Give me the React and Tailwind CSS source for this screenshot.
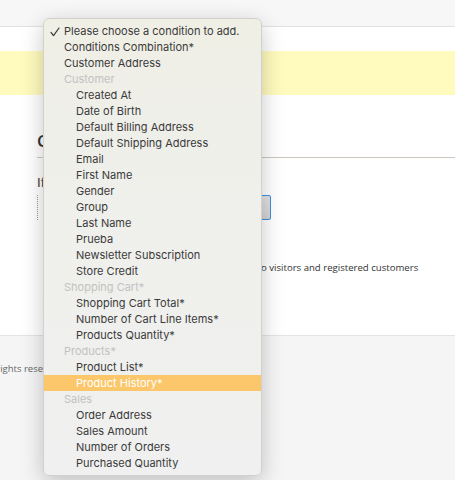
import React from "react";

const ITEMS = [
  { label: "Please choose a condition to add.", kind: "top", checked: true },
  { label: "Conditions Combination*", kind: "top" },
  { label: "Customer Address", kind: "top" },
  { label: "Customer", kind: "group" },
  { label: "Created At", kind: "sub" },
  { label: "Date of Birth", kind: "sub" },
  { label: "Default Billing Address", kind: "sub" },
  { label: "Default Shipping Address", kind: "sub" },
  { label: "Email", kind: "sub" },
  { label: "First Name", kind: "sub" },
  { label: "Gender", kind: "sub" },
  { label: "Group", kind: "sub" },
  { label: "Last Name", kind: "sub" },
  { label: "Prueba", kind: "sub" },
  { label: "Newsletter Subscription", kind: "sub" },
  { label: "Store Credit", kind: "sub" },
  { label: "Shopping Cart*", kind: "group" },
  { label: "Shopping Cart Total*", kind: "sub" },
  { label: "Number of Cart Line Items*", kind: "sub" },
  { label: "Products Quantity*", kind: "sub" },
  { label: "Products*", kind: "group" },
  { label: "Product List*", kind: "sub" },
  { label: "Product History*", kind: "sub", active: true },
  { label: "Sales", kind: "group" },
  { label: "Order Address", kind: "sub" },
  { label: "Sales Amount", kind: "sub" },
  { label: "Number of Orders", kind: "sub" },
  { label: "Purchased Quantity", kind: "sub" },
];

function Check() {
  return (
    <svg width="10" height="10" viewBox="0 0 10 10" className="absolute left-[6px] top-[4px]">
      <path d="M1 5.4 L3.5 8.6 L9 1" fill="none" stroke="#3a3a3a" strokeWidth="1.2" strokeLinecap="round" strokeLinejoin="round" />
    </svg>
  );
}

function Menu() {
  return (
    <div
      className="absolute left-[43px] top-[18px] w-[219px] rounded-[6px] border border-[#d0d0cc] pt-[4px] pb-[4px] shadow-[0_6px_22px_rgba(0,0,0,0.22)] bg-[linear-gradient(180deg,#f0efe5_0%,#efefea_25%,#f0f0f0_100%)]"
      style={{ fontFamily: "Inter, 'Noto Sans', sans-serif" }}
    >
      {ITEMS.map((it) => (
        <div
          key={it.label}
          className={
            "relative h-[16px] leading-[16px] text-[11px] whitespace-nowrap " +
            (it.active ? "bg-[#fcc76a] text-white " : "") +
            (it.kind === "sub" ? "pl-[32px] " : "pl-[20px] ") +
            (it.kind === "group" ? "text-[#c2c2c2]" : it.active ? "" : "text-[#3a3a3a]")
          }
        >
          {it.checked && <Check />}
          {it.label}
        </div>
      ))}
    </div>
  );
}

export default function App() {
  return (
    <div className="relative w-[455px] h-[480px] overflow-hidden bg-white" style={{ fontFamily: "'Open Sans', sans-serif" }}>
      <div className="h-[27px] bg-[#f7f7f7] border-b border-[#e2e2e2]" />
      <div className="h-[24px]" />
      <div className="h-[44px] bg-[#fffbbe]" />
      <div className="h-[240px] pl-[37px]">
        <div className="pt-[35px] text-[17px] font-semibold text-[#333] leading-[22px] whitespace-nowrap">Conditions</div>
        <div className="mt-[5px] h-px bg-[#cdc6bd]" />
        <div className="mt-[17px] text-[12px] font-semibold text-[#555] leading-[16px] whitespace-nowrap">If ALL of these conditions are TRUE:</div>
        <div className="flex mt-[4px] h-[25px]">
          <div className="w-px border-l border-dotted border-[#9a9a9a]" />
          <div className="ml-[17px] w-[216px] h-[25px] rounded-[2px] bg-[linear-gradient(180deg,#e3e3e3,#d3d3d3)] border border-[#3d8fe0]" />
        </div>
        <div className="mt-[41px] flex text-[9.6px] text-[#333] leading-[14px] whitespace-nowrap">
          <span className="w-[224px] overflow-hidden flex justify-end">This rule applies t</span>
          <span>o visitors and registered customers</span>
        </div>
      </div>
      <div className="h-[145px] bg-[#f5f5f5] border-t border-[#e4e4e4]">
        <div className="mt-[26px] flex text-[9.5px] text-[#666] leading-[14px] whitespace-nowrap">
          <span className="w-[43px] overflow-hidden flex justify-end">Copyright © 2024. All rights rese</span>
          <span>rved.</span>
        </div>
      </div>
      <Menu />
    </div>
  );
}
